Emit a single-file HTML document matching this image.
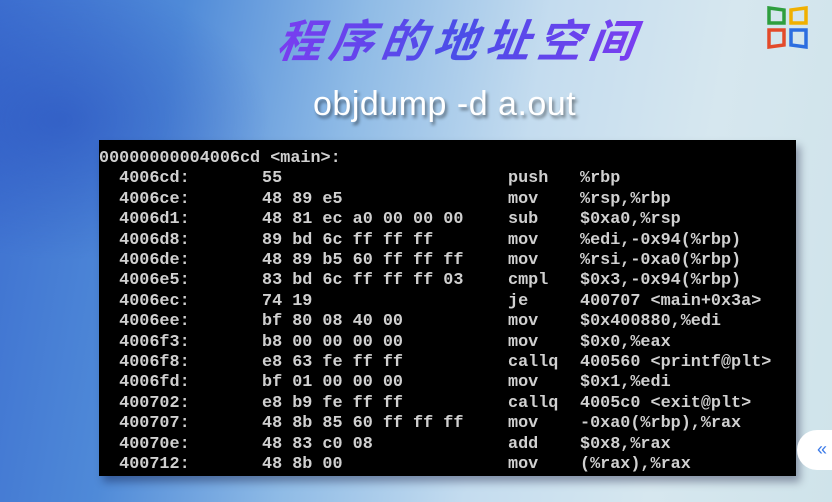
<!DOCTYPE html>
<html><head><meta charset="utf-8"><style>
html,body{margin:0;padding:0}
body{width:832px;height:502px;overflow:hidden;position:relative;
background:
radial-gradient(ellipse 300px 200px at 60px 120px, rgba(40,80,190,.6), transparent 70%),
linear-gradient(100deg,#3d6fd0 0%,#4f8ad8 20%,#8fbbe6 40%,#c4dcef 60%,#d6e7ef 80%,#cfe3ea 100%);
font-family:"Liberation Sans",sans-serif}
.title{position:absolute;left:278px;top:5px;font-family:"Liberation Sans","Noto Sans CJK SC",sans-serif;font-weight:bold;font-size:45px;letter-spacing:7px;font-style:italic;transform:skewX(-8deg);
background:linear-gradient(90deg,#7a3df0,#4a4ee8,#7a3df0);-webkit-background-clip:text;color:transparent}
.sub{position:absolute;left:313px;top:85px;color:#fff;font-size:34px;letter-spacing:0.5px;text-shadow:2px 3px 3px rgba(0,0,0,.45)}
.box{position:absolute;left:99px;top:140px;width:697px;height:336px;background:#000;box-shadow:4px 6px 8px rgba(0,0,40,.35)}
.r{position:absolute;font-family:"Liberation Mono",monospace;font-weight:bold;font-size:16.8px;color:#d0d0d0;white-space:pre;line-height:18px}
.logo{position:absolute;left:766px;top:4px}
.tab{position:absolute;left:797px;top:430px;width:60px;height:40px;border-radius:20px;background:#fff}
</style></head><body>
<div class="title">程序的地址空间</div>
<div class="sub">objdump -d a.out</div>
<svg class="logo" width="50" height="46" viewBox="0 0 50 46">
<path d="M3 4 L18 6 L18 19 L3 19Z" fill="none" stroke="#2e9e3e" stroke-width="3.5"/>
<path d="M25 6 L40 4 L40 19 L25 19Z" fill="none" stroke="#f0b000" stroke-width="3.5"/>
<path d="M3 26 L18 26 L18 41 L3 43Z" fill="none" stroke="#e34a2a" stroke-width="3.5"/>
<path d="M25 26 L40 26 L40 43 L25 41Z" fill="none" stroke="#2c6ee0" stroke-width="3.5"/>
</svg>
<div class="box"></div>
<div class="tab"><span style="position:absolute;left:20px;top:9px;color:#3a7ae8;font-size:18px">«</span></div>
<div id="rows"></div>
<script>
var d=[["00000000004006cd &lt;main&gt;:","","",""],
["  4006cd:","55","push","%rbp"],
["  4006ce:","48 89 e5","mov","%rsp,%rbp"],
["  4006d1:","48 81 ec a0 00 00 00","sub","$0xa0,%rsp"],
["  4006d8:","89 bd 6c ff ff ff","mov","%edi,-0x94(%rbp)"],
["  4006de:","48 89 b5 60 ff ff ff","mov","%rsi,-0xa0(%rbp)"],
["  4006e5:","83 bd 6c ff ff ff 03","cmpl","$0x3,-0x94(%rbp)"],
["  4006ec:","74 19","je","400707 &lt;main+0x3a&gt;"],
["  4006ee:","bf 80 08 40 00","mov","$0x400880,%edi"],
["  4006f3:","b8 00 00 00 00","mov","$0x0,%eax"],
["  4006f8:","e8 63 fe ff ff","callq","400560 &lt;printf@plt&gt;"],
["  4006fd:","bf 01 00 00 00","mov","$0x1,%edi"],
["  400702:","e8 b9 fe ff ff","callq","4005c0 &lt;exit@plt&gt;"],
["  400707:","48 8b 85 60 ff ff ff","mov","-0xa0(%rbp),%rax"],
["  40070e:","48 83 c0 08","add","$0x8,%rax"],
["  400712:","48 8b 00","mov","(%rax),%rax"]];
var h="";
d.forEach(function(r,i){var t=150+i*20.4;
h+='<div class="r" style="left:99px;top:'+t+'px">'+r[0]+'</div>';
if(r[1])h+='<div class="r" style="left:262px;top:'+t+'px">'+r[1]+'</div><div class="r" style="left:508px;top:'+t+'px">'+r[2]+'</div><div class="r" style="left:580px;top:'+t+'px">'+r[3]+'</div>';});
document.getElementById("rows").innerHTML=h;
</script>
</body></html>
